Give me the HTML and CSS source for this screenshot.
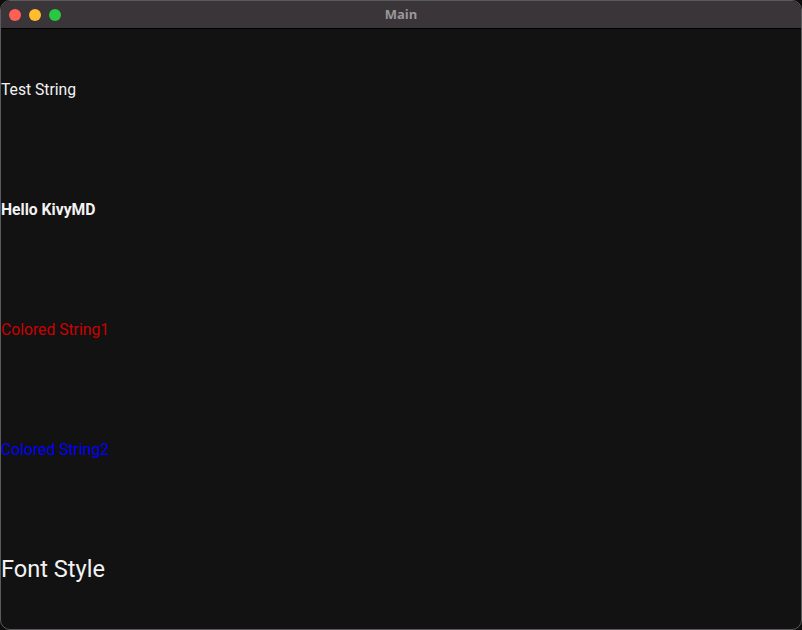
FILE: index.html
```html
<!DOCTYPE html>
<html lang="en">
    <head>
        <meta charset="UTF-8" />
        <title>Main</title>
        <link rel="stylesheet" href="styles.css">
    </head>
    <body>
        <div class="window">
            <div class="titlebar">
                <div class="lights">
                    <span class="light close"></span>
                    <span class="light min"></span>
                    <span class="light max"></span>
                </div>
                <div class="title">Main</div>
            </div>
            <div class="content">
                <div class="row"><span class="label">Test String</span></div>
                <div class="row"><span class="label bold">Hello KivyMD</span></div>
                <div class="row"><span class="label red">Colored String1</span></div>
                <div class="row"><span class="label blue">Colored String2</span></div>
                <div class="row"><span class="label big">Font Style</span></div>
            </div>
        </div>
    </body>
</html>
```

FILE: styles.css
```css
* {
    margin: 0;
    padding: 0;
    box-sizing: border-box;
}
html, body {
    width: 802px;
    height: 630px;
    background: #0e0e0e;
    overflow: hidden;
}
body {
    font-family: Roboto, 'Noto Sans', sans-serif;
}
.window {
    width: 802px;
    height: 630px;
    border: 1px solid #5c5a5c;
    border-radius: 10px;
    overflow: hidden;
    display: flex;
    flex-direction: column;
    background: #121212;
}
.titlebar {
    height: 28px;
    flex: none;
    background: #3a3538;
    border-bottom: 1px solid #000;
    position: relative;
    display: flex;
    align-items: center;
    justify-content: center;
}
.lights {
    position: absolute;
    left: 8px;
    top: 8px;
    display: flex;
    gap: 8px;
}
.light {
    width: 12px;
    height: 12px;
    border-radius: 50%;
}
.light.close { background: #ff5f57; }
.light.min { background: #febc2e; }
.light.max { background: #28c840; }
.title {
    font-family: 'Open Sans', 'Noto Sans', sans-serif;
    font-weight: 700;
    font-size: 13px;
    color: #9b979a;
    margin-top: -1px;
}
.content {
    flex: 1;
    display: flex;
    flex-direction: column;
}
.row {
    flex: 1;
    display: flex;
    align-items: center;
    padding-top: 2px;
}
.label {
    font-size: 15.7px;
    color: #f2f2f2;
    line-height: 1;
}
.label.bold { font-weight: 700; }
.label.red { color: #cc0000; }
.label.blue { color: #0000ff; }
.label.big { font-size: 23.6px; }
```
